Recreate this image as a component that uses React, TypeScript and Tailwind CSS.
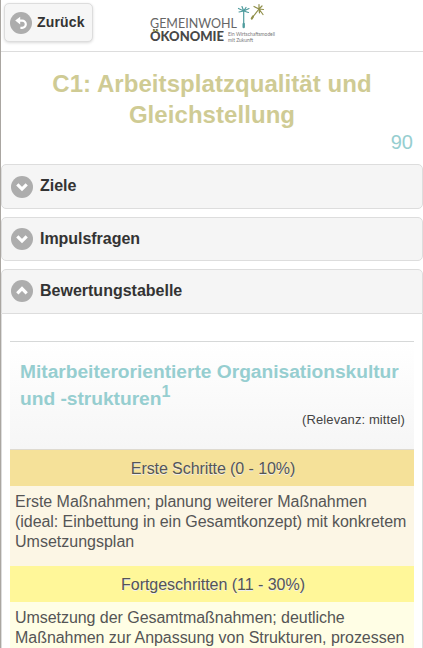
import React from 'react';

type IconKind = 'back' | 'down' | 'up';

function DiscIcon({ kind }: { kind: IconKind }) {
  return (
    <svg width="22" height="22" viewBox="0 0 22 22" className="block shrink-0">
      <circle cx="11" cy="11" r="11" fill="#adadad" />
      {kind === 'back' ? (
        <>
          <path d="M5.2 8.6 L10.2 4.8 V12.4 Z" fill="#fff" />
          <path d="M9 8.6 H12.2 A3.6 3.6 0 0 1 12.2 15.8 H10.4" fill="none" stroke="#fff" strokeWidth="2.2" />
        </>
      ) : (
        <path
          d={kind === 'down' ? 'M6.3 8.4 L11 13.1 L15.7 8.4' : 'M6.3 13.3 L11 8.6 L15.7 13.3'}
          fill="none"
          stroke="#fff"
          strokeWidth="3.2"
        />
      )}
    </svg>
  );
}

function Logo() {
  return (
    <svg width="130" height="48" viewBox="0 0 130 48" className="block overflow-visible" fontFamily='Lato, "Liberation Sans", sans-serif'>
      <text x="0" y="27.6" fontSize="13" fill="#666" textLength="87" lengthAdjust="spacingAndGlyphs">GEMEINWOHL</text>
      <text x="0" y="41" fontSize="13" fontWeight="900" fill="#484848" textLength="74" lengthAdjust="spacingAndGlyphs">ÖKONOMIE</text>
      <path d="M3.2 30.6h1.8M6.4 30.6h1.8" stroke="#9a9a45" strokeWidth="1.8" />
      <text x="78" y="35.8" fontSize="5.6" fill="#777" textLength="47" lengthAdjust="spacingAndGlyphs">Ein Wirtschaftsmodell</text>
      <text x="78" y="41.6" fontSize="5.6" fill="#777" textLength="25" lengthAdjust="spacingAndGlyphs">mit Zukunft</text>
      <g fill="none" stroke="#4f9c9e" strokeWidth="1.2" strokeLinecap="round">
        <path d="M93.7 11V24" />
        <path d="M93.7 11L88.5 8.5M93.7 11L89 12M93.7 11L92 6.5M93.7 11L96 7.5M93.7 11L99 8.5M93.7 11L98.5 12.5" />
        <path d="M93.7 24V27" strokeWidth="2.4" />
      </g>
      <g fill="none" stroke="#91904b" strokeWidth="1.2" strokeLinecap="round">
        <path d="M109 9L102 18" />
        <path d="M109 9L104 6.5M109 9L109 4.5M109 9L112 6M109 9L113.5 9.5M109 9L113 14.5M109 9L109.5 13" />
        <path d="M103 16.5L101.8 18.5" strokeWidth="2.2" />
      </g>
    </svg>
  );
}

function Bar({ title, open = false, className, label }: { title: string; open?: boolean; className: string; label: string }) {
  return (
    <h2 className={`flex items-center gap-[7px] border border-[#ddd] bg-[#f5f5f5] pl-[9px] text-base leading-5 font-bold text-[#333] [text-shadow:0_1px_0_#f3f3f3] ${className}`}>
      <DiscIcon kind={open ? 'up' : 'down'} />
      <span className={label}>{title}</span>
    </h2>
  );
}

type Line = { text: string; tracking: string };

function Stage({ title, head, body, lines }: { title: string; head: string; body: string; lines: Line[] }) {
  return (
    <section className={body}>
      <h4 className={`text-center text-base ${head}`}>{title}</h4>
      <p className="px-[5px] pt-[6px] text-base leading-5">
        {lines.map(({ text, tracking }) => (
          <span key={text} className={`block whitespace-nowrap ${tracking}`}>{text}</span>
        ))}
      </p>
    </section>
  );
}

export default function App() {
  return (
    <div className='h-[648px] w-[423px] overflow-hidden border-l border-[#aaa6a1] bg-white font-["Liberation_Sans",Arial,sans-serif] text-[#555]'>
      <header className="flex h-[52px] border-b border-[#ddd]">
        <button className="mt-[3px] ml-[3px] flex h-[39px] w-[89px] items-center gap-[5px] rounded-[5px] border border-[#ddd] bg-[#f6f6f6] pl-[5px] text-sm font-bold tracking-[0.15px] text-[#333] shadow-[0_1px_3px_rgba(0,0,0,0.15)]">
          <DiscIcon kind="back" />
          <span className="pb-[2px]">Zurück</span>
        </button>
        <div className="ml-[57px]">
          <Logo />
        </div>
      </header>
      <h1 className="h-[81px] pt-4 text-center text-[24px] leading-[31px] font-bold tracking-[0.06px] text-[#cfcb94]">
        C1: Arbeitsplatzqualität und
        <br />
        Gleichstellung
      </h1>
      <p className="h-[31px] pr-[10px] text-right text-xl leading-[19px] text-[#96ced0]">90</p>
      <Bar title="Ziele" className="mb-2 h-[45px] rounded-[5px]" label="pb-[2px]" />
      <Bar title="Impulsfragen" className="mb-2 h-[44px] rounded-[5px] tracking-[-0.04px]" label="" />
      <Bar title="Bewertungstabelle" open className="h-[45px] rounded-t-[5px] pb-px" label="" />
      <div className="border-x border-[#ddd] px-2 pt-[27px]">
        <div className="flex h-[108px] flex-col border-t border-[#d6d8d8] bg-linear-to-b from-white to-[#f6f6f6] pt-4 pr-[9px] pl-[10px]">
          <h3 className="text-[19.2px] leading-[27px] font-bold tracking-[-0.02px] whitespace-nowrap text-[#96ced0]">
            Mitarbeiterorientierte Organisationskultur
            <br />
            und -strukturen<sup className="text-[16px]">1</sup>
          </h3>
          <p className="text-right text-[13px] leading-4 tracking-[0.1px] text-[#444]">(Relevanz: mittel)</p>
        </div>
        <Stage
          title="Erste Schritte (0 - 10%)"
          head="h-[37px] border-t border-[#dedad0] bg-[#f5e199] pl-[2px] leading-[37px] tracking-[-0.08px] [text-shadow:0_1px_0_#eee]"
          body="h-[117px] bg-[#fcf6e5]"
          lines={[
            { text: 'Erste Maßnahmen; planung weiterer Maßnahmen', tracking: 'tracking-[-0.03px]' },
            { text: '(ideal: Einbettung in ein Gesamtkonzept) mit konkretem', tracking: 'tracking-[-0.05px]' },
            { text: 'Umsetzungsplan', tracking: 'tracking-normal' },
          ]}
        />
        <Stage
          title="Fortgeschritten (11 - 30%)"
          head="h-[36px] bg-[#fff799] pl-[2px] leading-[37px] tracking-[-0.03px] [text-shadow:0_1px_0_#eee]"
          body="h-[117px] bg-[#fffee5]"
          lines={[
            { text: 'Umsetzung der Gesamtmaßnahmen; deutliche', tracking: 'tracking-[-0.05px]' },
            { text: 'Maßnahmen zur Anpassung von Strukturen, prozessen', tracking: 'tracking-[-0.04px]' },
          ]}
        />
      </div>
    </div>
  );
}
